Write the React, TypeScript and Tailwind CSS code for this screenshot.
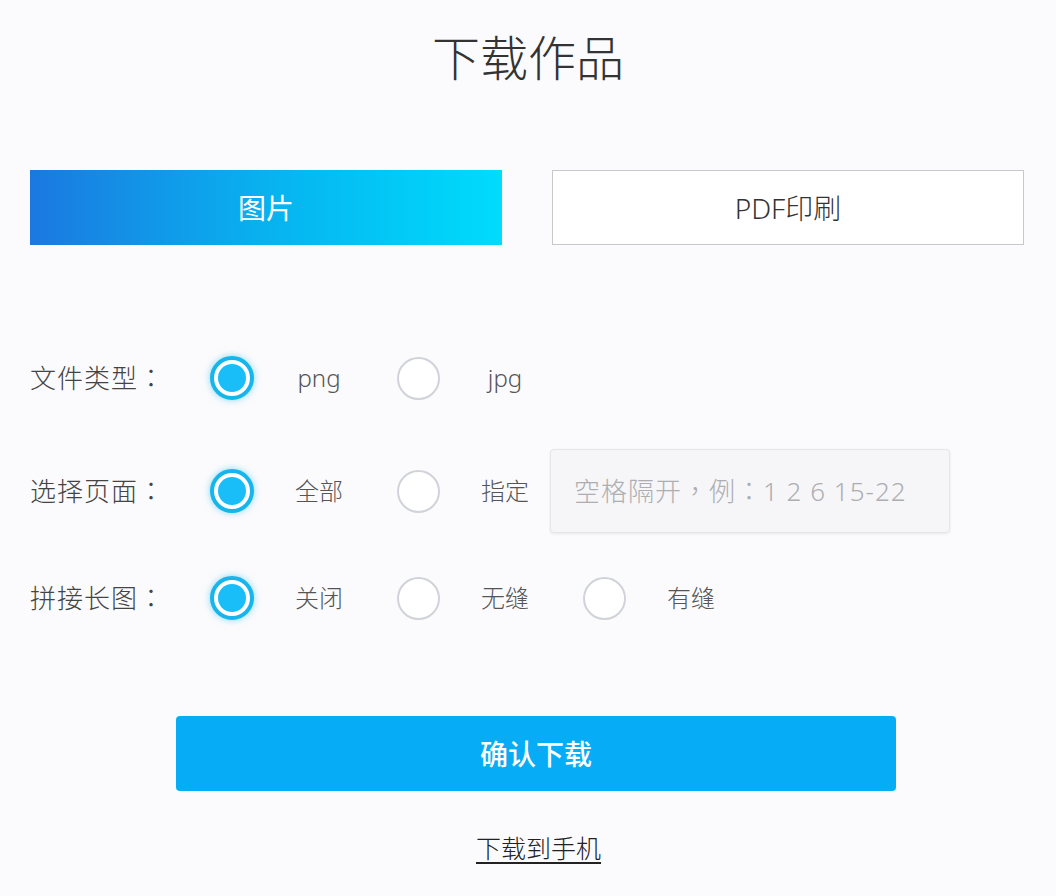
import React from 'react';

const font = { fontFamily: '"Noto Sans", "Noto Sans CJK SC", sans-serif' };
const tc = { fontFamily: '"Noto Sans", "Noto Sans CJK TC", sans-serif' };

const Radio = ({ checked }: { checked?: boolean }) =>
  checked ? (
    <span className="flex h-[44px] w-[44px] shrink-0 items-center justify-center rounded-full border-[4px] border-[#16b6ec] bg-white shadow-[0_0_7px_rgba(22,182,236,0.5)]">
      <span className="h-[28px] w-[28px] rounded-full bg-[#19bef8]" />
    </span>
  ) : (
    <span className="h-[43px] w-[43px] shrink-0 rounded-full border-2 border-[#d0d3d9] bg-white" />
  );

const Option = ({ label, checked, box = 'w-[130px] mr-[13px]' }: { label: string; checked?: boolean; box?: string }) => (
  <div className="flex items-center">
    <Radio checked={checked} />
    <span className={`${box} text-center text-[24px] font-light text-[#555]`}>{label}</span>
  </div>
);

const Row = ({ label, children, className = '' }: { label: string; children: React.ReactNode; className?: string }) => (
  <div className={`flex items-center pl-[30px] ${className}`}>
    <span className="w-[180px] text-[26px] font-light tracking-[1px] text-[#444]">
      {label}
      <span style={tc}>：</span>
    </span>
    {children}
  </div>
);

export default function App() {
  return (
    <div className="flex min-h-[896px] w-full flex-col bg-[#fbfbfd]" style={font}>
      <h1 className="pt-[30px] text-center text-[48px] leading-[56px] font-light text-[#333]">下载作品</h1>

      <div className="mt-[84px] flex gap-[50px] pl-[30px]">
        <button className="flex h-[75px] w-[472px] items-center justify-center bg-linear-to-r from-[#1b78e0] via-[#08b2ef] to-[#00dcfc] text-[28px] text-white">
          图片
        </button>
        <button className="flex h-[75px] w-[472px] items-center justify-center border border-[#c8c8cc] bg-white text-[28px] font-light text-[#333]">
          PDF印刷
        </button>
      </div>

      <Row label="文件类型" className="mt-[111px] h-[44px]">
        <Option label="png" checked />
        <Option label="jpg" />
      </Row>

      <Row label="选择页面" className="mt-[49px] h-[84px]">
        <Option label="全部" checked />
        <Option label="指定" box="w-[110px] pl-[20px]" />
        <div
          className="flex h-[84px] w-[400px] items-center rounded-[4px] border border-[#e6e6ea] bg-[#f6f6f8] pl-[23px] text-[26px] font-light tracking-[1px] text-[#aeaeb2] shadow-[0_1px_3px_rgba(0,0,0,0.08)]"
          style={tc}
        >
          空格隔开，例：1 2 6 15-22
        </div>
      </Row>

      <Row label="拼接长图" className="mt-[43px] h-[44px]">
        <Option label="关闭" checked />
        <Option label="无缝" />
        <Option label="有缝" />
      </Row>

      <div className="mt-[96px] pl-[176px]">
        <button className="flex h-[75px] w-[720px] items-center justify-center rounded-[4px] bg-[#06adf6] text-[28px] font-medium text-white">
          确认下载
        </button>
      </div>

      <div className="mt-[41px] pl-[476px]">
        <a className="text-[25px] leading-[32px] font-light text-[#222] underline underline-offset-[4px]">下载到手机</a>
      </div>
    </div>
  );
}
